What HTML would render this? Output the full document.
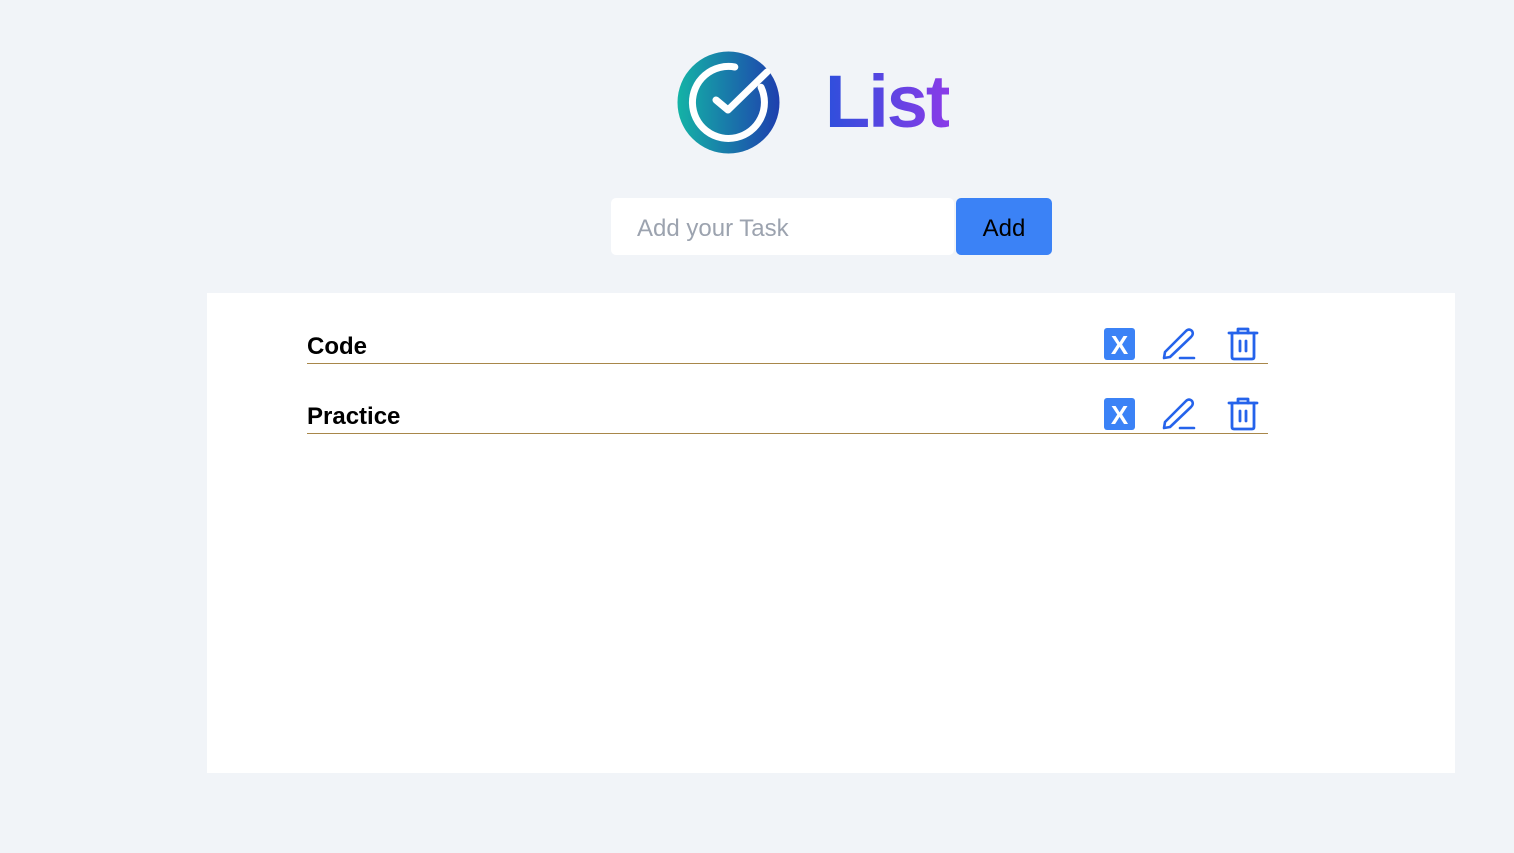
<!DOCTYPE html>
<html><head><meta charset="utf-8"><style>
*{margin:0;padding:0;box-sizing:border-box}
body{width:1514px;height:853px;background:#f1f4f8;font-family:"Liberation Sans",sans-serif;position:relative;overflow:hidden}
.title{position:absolute;left:825px;top:57px;font-size:74px;font-weight:bold;letter-spacing:-2px;background:linear-gradient(90deg,#2d4fdc,#8a3be8);-webkit-background-clip:text;background-clip:text;color:transparent;line-height:90px}
.inp{position:absolute;left:611px;top:198px;width:343px;height:57px;background:#fff;border-radius:5px;font-size:24px;color:#9ca3af;padding-left:26px;line-height:61px}
.btn{position:absolute;left:956px;top:198px;width:96px;height:57px;background:#3b82f6;border-radius:5px;font-size:24px;color:#000;text-align:center;line-height:61px}
.panel{position:absolute;left:207px;top:293px;width:1248px;height:480px;background:#fff}
.row{position:absolute;left:307px;width:961px;height:1px;background:#a8874a}
.lbl{position:absolute;left:307px;font-size:24px;font-weight:bold;color:#000}
.x{position:absolute;left:1104px;width:31px;height:32px;background:#3b82f6;border-radius:3px;color:#fff;font-weight:bold;font-size:26px;text-align:center;line-height:34px}
svg.i{position:absolute}
</style></head><body>
<svg style="position:absolute;left:677px;top:51px" width="103" height="103" viewBox="0 0 103 103">
<defs><linearGradient id="g" x1="0" x2="1"><stop offset="0" stop-color="#14b3a6"/><stop offset="1" stop-color="#1e3fae"/></linearGradient></defs>
<circle cx="51.5" cy="51.5" r="51" fill="url(#g)"/>
<path d="M84.1 36.3 A36 36 0 1 1 57.8 16" fill="none" stroke="#fff" stroke-width="7" stroke-linecap="round"/>
<path d="M39 49 L51 59 L90 21" fill="none" stroke="#fff" stroke-width="7" stroke-linecap="round" stroke-linejoin="round"/>
</svg>
<div class="title">List</div>
<div class="inp">Add your Task</div>
<div class="btn">Add</div>
<div class="panel"></div>

<div class="lbl" style="top:333px">Code</div>
<div class="row" style="top:363px"></div>
<div class="x" style="top:328px">X</div>
<svg class="i" style="left:1162px;top:327px" width="34" height="33" viewBox="0 0 34 33" fill="none" stroke="#2563eb" stroke-width="2.6" stroke-linecap="round" stroke-linejoin="round"><path d="M2 31 L3 25 L24 4 Q27 1 30 4 Q32 7 29 10 L8 30 Z"/><path d="M18 31 H32"/></svg>
<svg class="i" style="left:1227px;top:326px" width="32" height="35" viewBox="0 0 32 35" fill="none" stroke="#2563eb" stroke-width="2.8" stroke-linecap="round" stroke-linejoin="round"><path d="M2 7 H30"/><path d="M11 7 V3 H21 V7"/><path d="M5 7 V31 Q5 33 7 33 H25 Q27 33 27 31 V7"/><path d="M13 15 V25 M19 15 V25"/></svg>

<div class="lbl" style="top:403px">Practice</div>
<div class="row" style="top:433px"></div>
<div class="x" style="top:398px">X</div>
<svg class="i" style="left:1162px;top:397px" width="34" height="33" viewBox="0 0 34 33" fill="none" stroke="#2563eb" stroke-width="2.6" stroke-linecap="round" stroke-linejoin="round"><path d="M2 31 L3 25 L24 4 Q27 1 30 4 Q32 7 29 10 L8 30 Z"/><path d="M18 31 H32"/></svg>
<svg class="i" style="left:1227px;top:396px" width="32" height="35" viewBox="0 0 32 35" fill="none" stroke="#2563eb" stroke-width="2.8" stroke-linecap="round" stroke-linejoin="round"><path d="M2 7 H30"/><path d="M11 7 V3 H21 V7"/><path d="M5 7 V31 Q5 33 7 33 H25 Q27 33 27 31 V7"/><path d="M13 15 V25 M19 15 V25"/></svg>
</body></html>
